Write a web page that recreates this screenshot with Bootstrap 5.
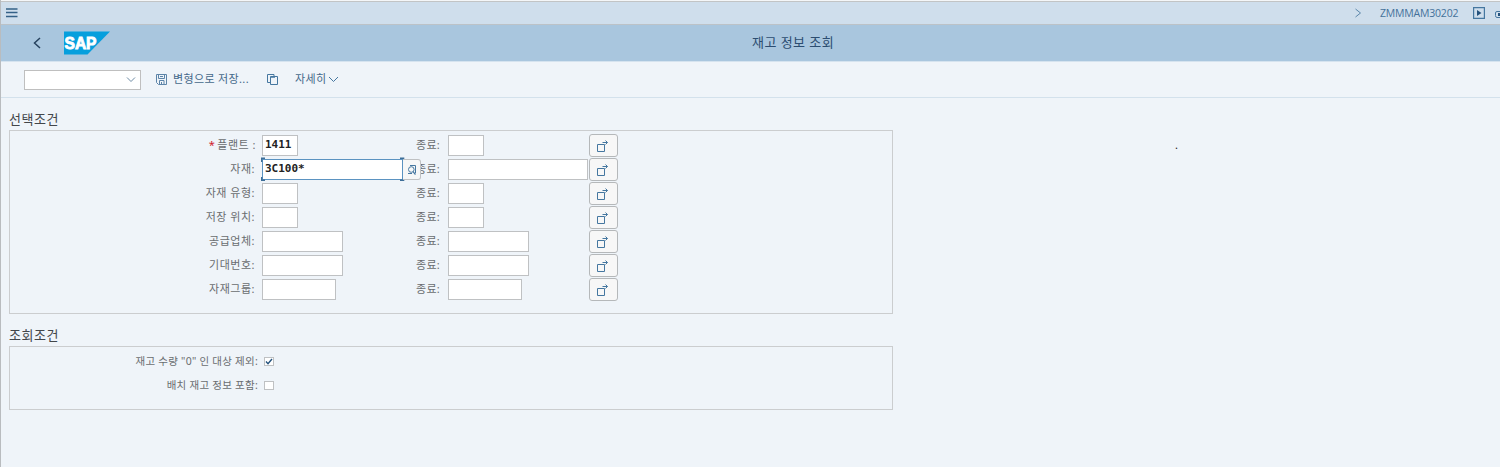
<!DOCTYPE html>
<html lang="ko">
<head>
<meta charset="utf-8">
<meta name="viewport" content="width=device-width, initial-scale=1">
<title>재고 정보 조회</title>
<link href="https://cdn.jsdelivr.net/npm/bootstrap@5.3.0/dist/css/bootstrap.min.css" rel="stylesheet">
<style>
body{font-family:"Noto Sans","Noto Sans CJK KR",sans-serif;font-size:11px;line-height:16px;color:#6a6d70;background:#eff4f9;height:467px;overflow:hidden;border-left:1px solid #b9bcbf}
svg{display:block;flex:none}
.sysbar{height:24px;margin-left:-1px;background:#cfdeec;border-top:1px solid #c2c4c5;border-bottom:1px solid #bcc2c7;border-left:1px solid #b9bcbf;color:#44719a;overflow:hidden}
.page-edge{height:1px;margin-left:-1px;background:#f4f6f8}
.sysbar .tcode{font-family:"Open Sans",sans-serif;font-size:10.5px;letter-spacing:-.2px;width:78px;margin-left:18px}
.titlebar{height:37px;background:#a9c6de;border-bottom:1px solid #d5e3ef;color:#2c4d70;padding-left:32px}
.titlebar .screen-title{font-size:13px;font-weight:400;width:84px;margin-left:641px;letter-spacing:.45px}
.toolbar{height:36px;border-bottom:1px solid #d3e1ec;color:#44688a;padding-left:23px;letter-spacing:.35px}
.toolbar>span{position:relative;top:-1px}
.combo{width:117px;height:20px;background:#fff;border:1px solid #bfbfbf;padding-right:4px}
.group-title{font-size:13px;line-height:18px;font-weight:400;letter-spacing:.5px;color:#42464a;margin:0 0 0 8px}
.group-box{width:884px;margin-left:8px;border:1px solid #cbcdcf;padding-top:3px}
.crit{display:grid;grid-template-columns:252px 154px 32px 141px 29px;height:24px}
.crit .lbl{padding:3px 7px 0 0;text-align:right;letter-spacing:.5px;white-space:nowrap}
.crit:first-child .lbl{padding-right:6px}
.crit .to{padding-top:3px;letter-spacing:.3px}
.req{color:#d0202c;margin-right:2px}
.field{flex:none;height:21px;margin-top:1px;padding:0 2px;border:1px solid #bfc1c3;background:#fff;color:#222;font:700 11px/18px "DejaVu Sans Mono",monospace;display:block}
.w-s{width:36px}.w-m{width:81px}.w-g{width:74px}.w-l{width:140px}
.focused{width:141px;border-color:#5b93c1}
.f4{position:absolute;left:-1px;top:-1px;pointer-events:none}
.f4help{flex:none;width:18px;height:21px;margin-top:1px;border:1px solid #bfc1c3;border-left:0;border-radius:0 3px 3px 0;background:#f6f7f7;z-index:2}
.multi{width:29px;height:23px;border:1px solid #b5b8ba;border-radius:3px;background:#f7f7f7;padding:2px 0 0 6px}
.opt{height:24px}
.opt .lbl{width:248px;text-align:right;letter-spacing:.25px;margin:-2px 6px 0 0;white-space:nowrap;font-size:10.5px}
.tick{width:10px;height:9px;border:1px solid #bfc1c3;background:#fff;margin-top:-1px}
.stray{position:absolute;left:1175px;top:137px;color:#222}
</style>
</head>
<body>
<div class="page-edge"></div>
<header class="sysbar d-flex align-items-center">
  <svg class="ms-1" width="14" height="12" viewBox="0 0 14 12"><path d="M1 2h11.500M1 5.500h11.500M1 9.500h11.500" stroke="#346187" stroke-width="1.500"/></svg>
  <svg style="margin-left:1335px" width="8" height="10" viewBox="0 0 8 10" fill="none" stroke="#5a86aa"><path d="M1.500 1 6.500 5 1.500 9"/></svg>
  <span class="tcode">ZMMMAM30202</span>
  <svg style="margin-left:15px" width="12" height="12" viewBox="0 0 12 12"><path d="M.6.6h10.800v10.800H.6z" fill="none" stroke="#4577a0" stroke-width="1.200"/><path d="M4 3l4.500 3L4 9z" fill="#24527d"/></svg>
  <svg style="margin-left:9px" width="6" height="12" viewBox="0 0 6 12"><path d="M7 4.500H3Q1.500 4.500 1.500 6v2.500Q1.500 10.500 3 10.500h4" fill="none" stroke="#4577a0"/><path d="M4 6h2v3H4z" fill="#24527d"/></svg>
</header>
<div class="titlebar d-flex align-items-center">
  <svg width="9" height="12" viewBox="0 0 9 12" fill="none" stroke="#27435f" stroke-width="1.500"><path d="M7 1 1.500 6l5.500 5"/></svg>
  <svg style="margin-left:22px" width="47" height="24" viewBox="0 0 47 24"><path d="M0 .5h46L23.500 23.500H0z" fill="#079fdd"/><text x="0.500" y="17.500" textLength="32" lengthAdjust="spacingAndGlyphs" font-family="Liberation Sans,sans-serif" font-weight="700" font-size="16.500" fill="#fff" stroke="#fff" stroke-width=".9">SAP</text></svg>
  <h1 class="screen-title mb-0 text-nowrap">재고 정보 조회</h1>
</div>
<div class="toolbar d-flex align-items-center">
  <div class="combo d-flex align-items-center justify-content-end"><svg width="10" height="7" viewBox="0 0 10 7" fill="none" stroke="#6d8ba5"><path d="M1 1.500 5 5.500 9 1.500"/></svg></div>
  <svg style="margin-left:15px" width="11" height="11" viewBox="0 0 11 11" fill="none" stroke="#5c84a8"><path d="M.5.5h10v10h-8l-2-2zM2.500.5v4h6v-4M3.500 10.500v-4h4.500v4M4 2.500h3M5.500 8v2"/></svg>
  <span class="text-nowrap" style="width:79px;margin-left:6px">변형으로 저장...</span>
  <svg style="margin-left:14px" width="13" height="12" viewBox="0 0 13 12" fill="none" stroke="#4577a0"><path d="M4 8.500H1.500v-8h6.500v2M4.500 2.500h7v8h-7z"/><path d="M5 3h4" stroke-width="1.500"/></svg>
  <span class="text-nowrap" style="width:32px;margin-left:16px">자세히</span>
  <svg style="margin-left:1px" width="11" height="8" viewBox="0 0 11 8" fill="none" stroke="#4577a0"><path d="M1 1 5.500 5.500 10 1"/></svg>
</div>
<main>
  <h2 class="group-title" style="padding-top:12px">선택조건</h2>
  <section class="group-box" id="criteria" style="height:184px;margin-top:2px"></section>
  <h2 class="group-title" style="padding-top:12px">조회조건</h2>
  <section class="group-box" style="height:64px;margin-top:2px">
    <div class="opt d-flex align-items-center"><span class="lbl">재고 수량 "0" 인 대상 제외:</span><span class="tick"><svg width="8" height="7" viewBox="0 0 8 7"><path d="M1 3.500 3 5.700 7 1" fill="none" stroke="#24527d" stroke-width="1.400"/></svg></span></div>
    <div class="opt d-flex align-items-center"><span class="lbl">배치 재고 정보 포함:</span><span class="tick"></span></div>
  </section>
</main>
<span class="stray">.</span>
<script>
const rows=[["플랜트 :","w-s","1411"],["자재:","w-l","3C100*"],["자재 유형:","w-s",""],["저장 위치:","w-s",""],["공급업체:","w-m",""],["기대번호:","w-m",""],["자재그룹:","w-g",""]];
const help=`<span class="f4help d-flex align-items-center justify-content-center"><svg width="10" height="12" viewBox="0 0 10 12" fill="none" stroke="#4577a0"><path d="M3 1.500h5.500v7.500M1 9.500h4"/><circle cx="4.300" cy="5.500" r="2.800"/><path d="M6 7.700 8.500 10.500" stroke-width="1.200"/></svg></span><svg class="f4" width="144" height="25" viewBox="0 0 144 25" fill="none" stroke="#3e6e98" stroke-width="1.400"><path d="M.7 5V1.200H4M139 1.200h3.600V5M.7 20v3.300H4M139 23.300h3.600V20"/></svg>`;
document.getElementById("criteria").innerHTML=rows.map(([t,w,v],i)=>`<div class="crit">
<span class="lbl">${i?"":'<span class="req">*</span>'}${t}</span>
<div class="d-flex position-relative"><span class="field ${w} ${i===1?"focused":""}">${v}</span>${i===1?help:""}</div>
<span class="to text-nowrap">종료:</span>
<span class="field ${w}"></span>
<button class="multi d-flex align-items-center" type="button" aria-label="다중 선택"><svg width="14" height="13" viewBox="0 0 14 13" fill="none" stroke="#4577a0"><path d="M1.500 4.500h7v7h-7zM6.500 2.500h5M9.500.5l2 2-2 2"/></svg></button></div>`).join("");
</script>
<script src="https://cdn.jsdelivr.net/npm/bootstrap@5.3.0/dist/js/bootstrap.bundle.min.js"></script>
</body>
</html>
